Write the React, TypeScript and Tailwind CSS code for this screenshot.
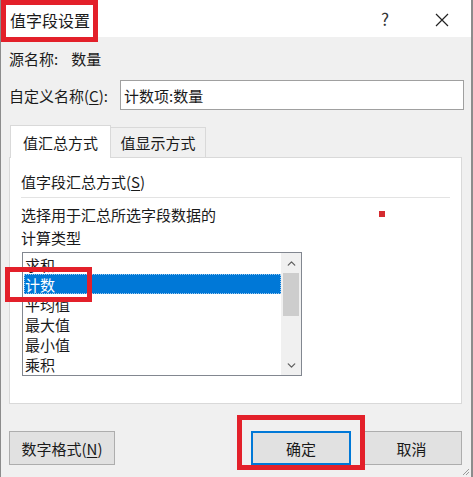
import { ChevronUp, ChevronDown } from 'lucide-react'

const font = { fontFamily: '"Noto Sans CJK SC", "Noto Sans", sans-serif' }

const items = ['求和', '计数', '平均值', '最大值', '最小值', '乘积']

export default function App() {
  return (
    <div
      style={font}
      className="relative h-[477px] w-[473px] overflow-hidden border-r-2 border-l border-[#8c8c8c] bg-[#f0f0f0] text-[15px] leading-none text-[#1a1a1a]">
      {/* title bar */}
      <div className="flex h-[37px] items-center bg-white pl-[9px] pr-[22px]">
        <span className="flex-1 pt-[2px] text-[16px]">值字段设置</span>
        <span className="mr-[46px] text-[17px] text-[#333]">?</span>
        <svg width="14" height="14" viewBox="0 0 14 14" className="mt-[2px]">
          <path d="M1 1L13 13M13 1L1 13" stroke="#222" strokeWidth="1.2" />
        </svg>
      </div>

      <div className="flex h-[43px] items-center pl-[8px]">
        <span>源名称:</span>
        <span className="ml-[13px]">数量</span>
      </div>

      <div className="flex items-center pl-[8px]">
        <span className="w-[111px]">
          自定义名称(<span className="underline underline-offset-2">C</span>):
        </span>
        <div className="flex h-[30px] w-[344px] items-center border border-[#a0a0a0] bg-white pl-[3px] text-[15px]">
          计数项:数量
        </div>
      </div>

      {/* tabs */}
      <div className="mt-[15px] flex items-end pl-[9px]">
        <div className="relative z-10 -mb-px flex h-[33px] w-[101px] items-center justify-center border border-b-0 border-[#d9d9d9] bg-white">
          值汇总方式
        </div>
        <div className="flex h-[30px] w-[95px] items-center justify-center border border-b-0 border-l-0 border-[#d9d9d9] bg-[#f0f0f0]">
          值显示方式
        </div>
      </div>

      <div className="ml-[8px] h-[247px] w-[453px] border border-[#d9d9d9] bg-white px-[11px]">
        <div className="flex h-[39px] items-end pb-[8px]">
          值字段汇总方式(<span className="underline underline-offset-2">S</span>)
        </div>
        <div className="h-px bg-[#e3e3e3]" />
        <div className="flex h-[28px] items-center pt-[4px]">
          <span className="flex-1">选择用于汇总所选字段数据的</span>
          <span className="mr-[65px] h-[6px] w-[6px] bg-[#d52b30]" />
        </div>
        <div className="flex h-[22px] items-center">计算类型</div>

        <div className="ml-[1px] mt-[4px] flex h-[124px] w-[280px] border border-[#828790] bg-white">
          <div className="flex-1 pl-[1px] pt-[1px]">
            {items.map((it, i) => (
              <div
                key={it}
                className={
                  'flex h-[20px] items-center pl-[1px] ' +
                  (i === 1 ? 'bg-[#0078d7] text-white outline-1 -outline-offset-1 outline-dotted outline-[#99c8ee]' : '')
                }>
                {it}
              </div>
            ))}
          </div>
          <div className="flex w-[20px] flex-col bg-[#f0f0f0]">
            <div className="flex h-[20px] items-center justify-center">
              <ChevronUp size={13} strokeWidth={2.4} color="#606060" />
            </div>
            <div className="mx-[2px] h-[43px] bg-[#cdcdcd]" />
            <div className="flex-1" />
            <div className="flex h-[20px] items-center justify-center">
              <ChevronDown size={13} strokeWidth={2.4} color="#606060" />
            </div>
          </div>
        </div>
      </div>

      {/* buttons */}
      <div className="mt-[27px] flex items-center pl-[8px]">
        <button className="h-[34px] w-[106px] border border-[#adadad] bg-[#e1e1e1] text-[15px]">
          数字格式(<span className="underline underline-offset-2">N</span>)
        </button>
        <div className="flex-1" />
        <button className="h-[34px] w-[100px] border-2 border-[#0078d7] bg-[#e1e1e1] text-[15px]">
          确定
        </button>
        <button className="ml-[10px] mr-[9px] h-[34px] w-[101px] border border-[#adadad] bg-[#e1e1e1] text-[15px]">
          取消
        </button>
      </div>

      {/* resize grip */}
      <svg width="10" height="10" viewBox="0 0 10 10" className="absolute bottom-[1px] right-[1px]">
        <path d="M9 3L3 9M9 6L6 9" stroke="#9a9a9a" strokeWidth="1" />
      </svg>

      {/* red annotation boxes */}
      <div className="pointer-events-none absolute left-0 top-0 h-[42px] w-[97px] border-[5px] border-[#e3202a]" />
      <div className="pointer-events-none absolute left-[4px] top-[267px] h-[35px] w-[87px] border-[5px] border-[#e3202a]" />
      <div className="pointer-events-none absolute left-[236px] top-[415px] h-[55px] w-[128px] border-[5px] border-[#e3202a]" />
    </div>
  )
}
